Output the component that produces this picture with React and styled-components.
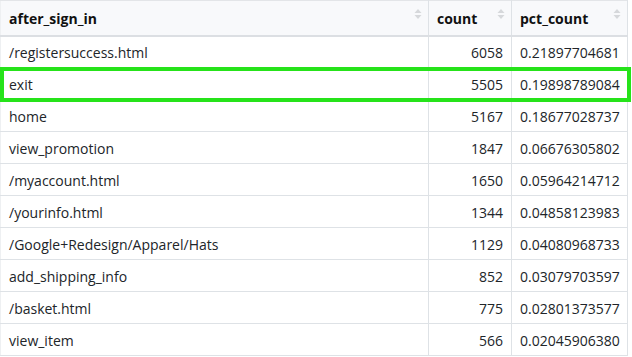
import React from "react";
import styled, { createGlobalStyle } from "styled-components";

const Global = createGlobalStyle`
  html, body { margin: 0; padding: 0; background: #fff; }
  body { font-family: "Open Sans", "Noto Sans", sans-serif; }
`;

const Wrap = styled.div`
  position: relative;
  width: 632px;
`;

const Table = styled.table`
  width: 627px;
  border-collapse: collapse;
  table-layout: fixed;
  font-size: 14px;
  color: #212529;
`;

const Th = styled.th`
  position: relative;
  height: 35px;
  padding: 1px 8px 0;
  text-align: left;
  font-weight: 700;
  color: #111;
  background: #f8f9fb;
  border-top: 1px solid #e3e5e8;
  border-bottom: 2px solid #dcdfe3;
  border-right: 1px solid #dee2e6;
  border-left: ${(p) => (p.$first ? "1px solid #eef0f2" : "none")};
  box-sizing: border-box;
`;

const SortIcon = styled.svg`
  position: absolute;
  right: 6px;
  top: 7px;
`;

const Td = styled.td`
  height: 32px;
  padding: 2px 8px 0;
  text-align: ${(p) => (p.$num ? "right" : "left")};
  border-bottom: 1px solid #dee2e6;
  border-right: 1px solid #dee2e6;
  border-left: ${(p) => (p.$first ? "1px solid #eef0f2" : "none")};
  white-space: nowrap;
  overflow: hidden;
  box-sizing: border-box;
`;

const Highlight = styled.div`
  position: absolute;
  left: 0;
  top: 67px;
  width: 631px;
  height: 35px;
  box-sizing: border-box;
  border: 4px solid #26e31a;
  pointer-events: none;
`;

const Sort = () => (
  <SortIcon width="8" height="12" viewBox="0 0 8 12">
    <path d="M4 1 L7.5 5 H0.5 Z" fill="#d6d8db" />
    <path d="M4 11 L7.5 7 H0.5 Z" fill="#d6d8db" />
  </SortIcon>
);

const rows = [
  ["/registersuccess.html", "6058", "0.21897704681"],
  ["exit", "5505", "0.19898789084"],
  ["home", "5167", "0.18677028737"],
  ["view_promotion", "1847", "0.06676305802"],
  ["/myaccount.html", "1650", "0.05964214712"],
  ["/yourinfo.html", "1344", "0.04858123983"],
  ["/Google+Redesign/Apparel/Hats", "1129", "0.04080968733"],
  ["add_shipping_info", "852", "0.03079703597"],
  ["/basket.html", "775", "0.02801373577"],
  ["view_item", "566", "0.02045906380"],
];

export default function App() {
  return (
    <Wrap>
      <Global />
      <Table>
        <colgroup>
          <col style={{ width: 428 }} />
          <col style={{ width: 83 }} />
          <col style={{ width: 116 }} />
        </colgroup>
        <thead>
          <tr>
            <Th $first>
              after_sign_in
              <Sort />
            </Th>
            <Th>
              count
              <Sort />
            </Th>
            <Th>
              pct_count
              <Sort />
            </Th>
          </tr>
        </thead>
        <tbody>
          {rows.map((r) => (
            <tr key={r[0]}>
              <Td $first>{r[0]}</Td>
              <Td $num>{r[1]}</Td>
              <Td>{r[2]}</Td>
            </tr>
          ))}
        </tbody>
      </Table>
      <Highlight />
    </Wrap>
  );
}
